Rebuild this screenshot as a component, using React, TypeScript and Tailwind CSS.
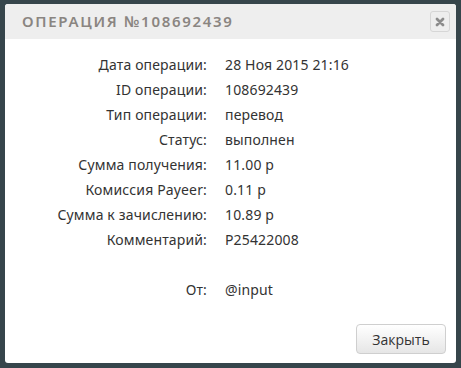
const rows: [string, string][] = [
  ["Дата операции:", "28 Ноя 2015 21:16"],
  ["ID операции:", "108692439"],
  ["Тип операции:", "перевод"],
  ["Статус:", "выполнен"],
  ["Сумма получения:", "11.00 р"],
  ["Комиссия Payeer:", "0.11 р"],
  ["Сумма к зачислению:", "10.89 р"],
  ["Комментарий:", "P25422008"],
  ["", ""],
  ["От:", "@input"],
];

export default function App() {
  return (
    <div className="w-[461px] h-[368px] bg-[#36454b] pt-[4px] pl-[5px]">
      <div className="w-[451px] h-[359px] bg-white rounded-[3px] overflow-hidden flex flex-col font-['Noto_Sans',sans-serif]">
        {/* Header */}
        <div className="h-[35px] bg-[#eeeeee] flex items-center justify-between pl-[17px] pr-[6px]">
          <span className="text-[15px] font-semibold tracking-[1.7px] text-[#8a8581] uppercase">
            Операция №108692439
          </span>
          <button className="w-[20px] h-[21px] rounded-[3px] border border-[#d6d6d6] bg-[#eeeeee] flex items-center justify-center">
            <svg width="10" height="10" viewBox="0 0 10 10">
              <path d="M2 2 L8 8 M8 2 L2 8" stroke="#8c8c8c" strokeWidth="2.8" strokeLinecap="round" />
            </svg>
          </button>
        </div>

        {/* Details */}
        <div className="pt-[13px] grid grid-cols-[202px_1fr] gap-x-[18px] text-[14px] tracking-[0.15px] leading-[25px] text-[#333]">
          {rows.map(([l, v], i) => (
            <div key={i} className="contents">
              <div className="text-right h-[25px] whitespace-nowrap">{l}</div>
              <div className="h-[25px]">{v}</div>
            </div>
          ))}
        </div>

        <div className="mt-auto flex justify-end pr-[10px] pb-[9px]">
          <button className="w-[90px] h-[30px] rounded-[4px] border border-[#cfcfcf] bg-gradient-to-b from-white to-[#e6e6e6] text-[14px] text-[#333] font-['Open_Sans',sans-serif]">
            Закрыть
          </button>
        </div>
      </div>
    </div>
  );
}
